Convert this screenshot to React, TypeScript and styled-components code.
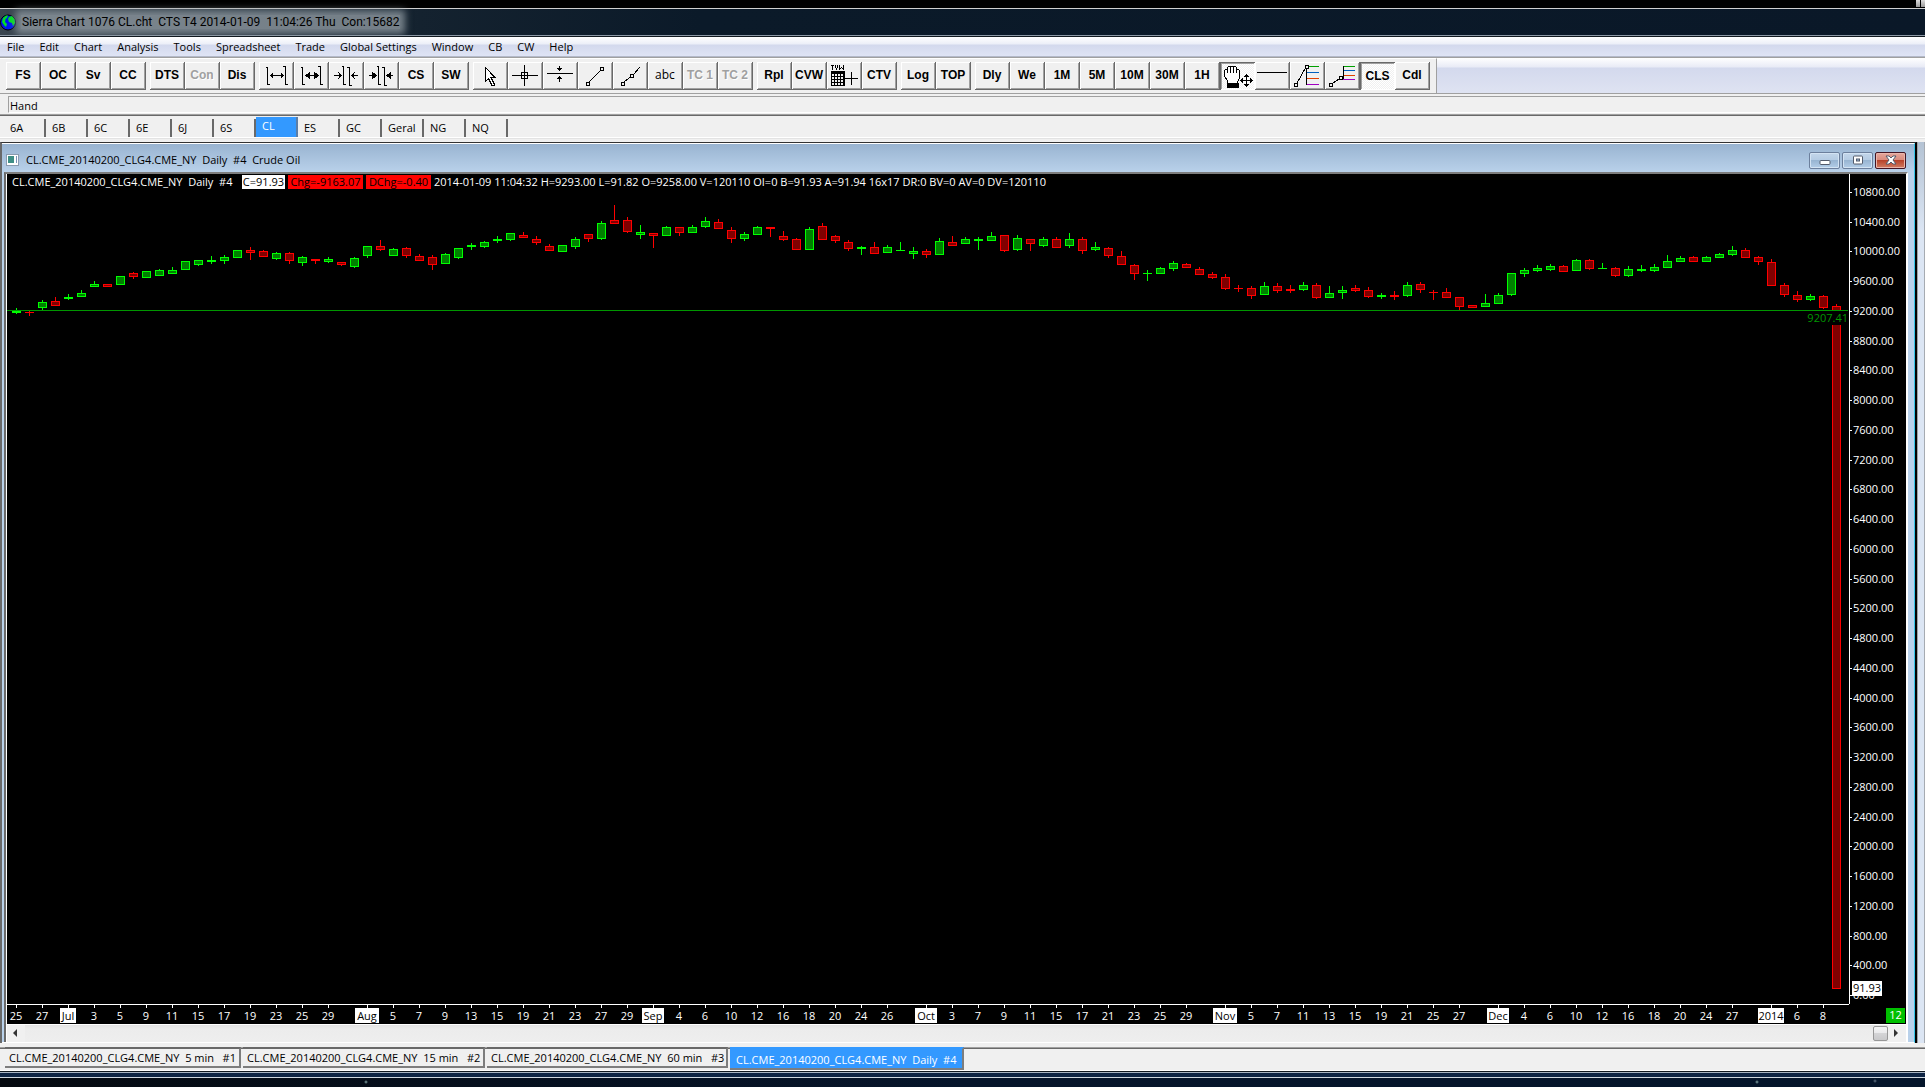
import React from "react";
import styled, { createGlobalStyle, css } from "styled-components";

const UI = '"Open Sans", "Noto Sans", sans-serif';

const GlobalStyle = createGlobalStyle`
  *, *::before, *::after { box-sizing: border-box; }
  body { margin: 0; background: #000; }
  button { font: inherit; color: inherit; border: 0; margin: 0; padding: 0; background: none; }
`;

const Desktop = styled.div`
  display: flex;
  flex-direction: column;
  min-height: 100vh;
  background: #000;
  color: #000;
  font: 11px/14px ${UI};
`;

const DesktopTop = styled.div`
  display: flex;
  justify-content: flex-end;
  gap: 1px;
  height: 8px;
  padding-bottom: 1px;
`;

const DesktopTile = styled.span`
  width: 4px;
  background: linear-gradient(#ddd, #999);
`;

const TitleBar = styled.header`
  display: flex;
  align-items: center;
  height: 28px;
  border-top: 1px solid #d0d0d0;
  border-bottom: 1px solid #8d99a6;
  background: linear-gradient(90deg, #3a4650 0, #14222f 420px, #0b1a29 700px, #0a1828 100%);
`;

const Title = styled.h1`
  margin: 0 0 0 4px;
  padding: 0 1px;
  font: 400 12px/14px Roboto, ${UI};
  white-space: pre;
  background: rgba(140, 150, 158, 0.8);
  box-shadow: 0 0 7px 5px rgba(140, 150, 158, 0.8);
`;

const MenuBar = styled.nav`
  display: flex;
  align-items: center;
  gap: 15px;
  height: 21px;
  padding: 0 7px;
  border-top: 1px solid #10181f;
  border-bottom: 1px solid #b3b9c9;
  background: linear-gradient(#fff 0, #eceff8 7px, #d3d9ed 8px, #dfe4f5 100%);
`;

const MenuItem = styled.button`
  white-space: nowrap;
`;

const ToolStrip = styled.div`
  display: flex;
  height: 37px;
  border-top: 1px solid #a0a0a0;
  border-bottom: 1px solid #a0a0a0;
  background: linear-gradient(#fff 0, #e8ebf6 9px, #d3d9ed 10px, #dfe3f2 100%);
`;

const Tools = styled.div`
  display: flex;
  gap: 4px;
  padding: 3px 6px 4px;
  border-top: 1px solid #fff;
  border-right: 1px solid #a0a0a0;
  background: #f0f0f0;
`;

const ToolGroup = styled.div`
  display: flex;
`;

const ToolButton = styled.button<{ $pressed?: boolean; $plain?: boolean }>`
  display: flex;
  align-items: center;
  justify-content: center;
  width: 35px;
  height: 28px;
  padding: 0 1px 2px 0;
  font: 700 12px/14px "Liberation Sans", Arial, sans-serif;
  background: #f0f0f0;
  box-shadow: inset -1px -1px #696969, inset 1px 1px #fff, inset -2px -2px #a0a0a0;
  &:disabled { color: #a0a0a0; text-shadow: 1px 1px #fff; }
  ${(p) => p.$plain && css`font: 400 12px/14px ${UI};`}
  ${(p) =>
    p.$pressed &&
    css`
      padding: 0;
      background: repeating-conic-gradient(#f0f0f0 0 25%, #fff 0 50%) 0 0 / 2px 2px;
      box-shadow: inset 1px 1px #696969, inset -1px -1px #fff, inset 2px 2px #a0a0a0;
    `}
  svg { flex: none; align-self: flex-start; }
`;

const StatusStrip = styled.div`
  height: 21px;
  padding: 2px 0 0 8px;
  background: #f0f0f0;
  border-bottom: 1px solid #a0a0a0;
`;

const StatusText = styled.div`
  height: 17px;
  padding: 1px;
  line-height: 15px;
  border-top: 1px solid #a0a0a0;
  border-left: 1px solid #a0a0a0;
  border-bottom: 1px solid #fff;
`;

const SymbolTabs = styled.div`
  display: flex;
  height: 27px;
  padding: 3px 4px 5px;
  border-top: 1px solid #696969;
  background: linear-gradient(#f0f0f0 21px, #fff 21px, #fff 22px, #e3e3e3 22px, #e3e3e3 23px, #f0f0f0 23px);
`;

const SymbolTab = styled.button<{ $active?: boolean }>`
  width: 42px;
  padding-left: 6px;
  text-align: left;
  height: 18px;
  border-right: 2px solid #696969;
  ${(p) =>
    p.$active &&
    css`
      height: 20px;
      margin-top: -2px;
      padding-bottom: 2px;
      color: #fff;
      background: #3399ff;
      border-right-color: #5c7ea6;
    `}
`;

const Workspace = styled.main`
  display: flex;
  flex: 1;
  min-height: 0;
  background: #f0f0f0;
`;

const ChartWindow = styled.section`
  display: flex;
  flex-direction: column;
  flex: 1;
  min-width: 0;
  border-left: 2px solid #696969;
  border-right: 2px solid #000;
  border-top: 1px solid #333;
  background: #b9d1ea;
`;

const WindowBody = styled.div`
  display: flex;
  flex-direction: column;
  flex: 1;
  padding: 0 6px 0 2px;
  border-top: 1px solid #fff;
  border-right: 1px solid #35c5e6;
  border-bottom: 1px solid #fff;
  background: linear-gradient(#99b4d1, #b9d1ea 28px);
`;

const WindowTitle = styled.div`
  display: flex;
  align-items: center;
  height: 28px;
  gap: 7px;
  padding: 4px 2px 0 2px;
`;

const WindowName = styled.h2`
  flex: 1;
  margin: 0;
  font-size: 11px;
  font-weight: 400;
  white-space: pre;
`;

const WindowButtons = styled.div`
  display: flex;
  gap: 2px;
`;

const WindowButton = styled.button<{ $close?: boolean }>`
  display: flex;
  align-items: center;
  justify-content: center;
  width: 31px;
  height: 17px;
  border: 1px solid ${(p) => (p.$close ? "#431422" : "#6c7f9c")};
  border-radius: 2px;
  background: ${(p) =>
    p.$close
      ? "linear-gradient(#e5a79c 0, #d98a7c 48%, #b8432b 50%, #d07c62 100%)"
      : "linear-gradient(#c3d6ea 0, #b4cbe3 48%, #98b5d2 50%, #b3cde8 100%)"};
  box-shadow: inset 0 0 0 1px ${(p) => (p.$close ? "#e9b5ab" : "#d3e3f3")};
`;

const Client = styled.div`
  display: flex;
  flex-direction: column;
  flex: 1;
  border-top: 2px solid #7d7d7d;
  border-left: 2px solid #696969;
  border-right: 2px solid #fff;
  background: #fff;
`;

const ChartGrid = styled.div`
  display: grid;
  flex: 1;
  grid-template-columns: 1fr 57px;
  grid-template-rows: 1fr 20px;
  margin-left: 1px;
  background: #000;
  color: #fff;
`;

const Plot = styled.div`
  display: flex;
  flex-direction: column;
  min-width: 0;
  svg { flex: 1; display: block; width: 100%; height: auto; min-height: 0; }
`;

const Quote = styled.div`
  display: flex;
  gap: 3px;
  height: 16px;
  padding: 1px 5px 0;
  white-space: pre;
`;

const QuoteName = styled.span`
  width: 227px;
`;

const QuoteBox = styled.span<{ $bg: string; $w: number }>`
  width: ${(p) => p.$w}px;
  height: 14px;
  text-align: center;
  color: #000;
  background: ${(p) => p.$bg};
`;

const PriceAxis = styled.div`
  border-left: 1px solid #fff;
  svg { display: block; width: 56px; height: 100%; }
`;

const DateAxis = styled.div`
  border-top: 1px solid #fff;
  svg { display: block; width: 100%; height: 19px; }
`;

const Corner = styled.div`
  display: flex;
  justify-content: flex-end;
  align-items: flex-end;
  padding: 0 1px 1px 0;
`;

const BarsBadge = styled.span`
  width: 19px;
  height: 15px;
  text-align: center;
  background: #00c000;
`;

const ScrollBar = styled.div`
  display: flex;
  align-items: center;
  height: 18px;
  margin-left: 1px;
  border-top: 1px solid #fff;
  background: linear-gradient(#e3e3e3, #ececec 4px, #eee);
`;

const ScrollArrow = styled.button`
  display: flex;
  align-items: center;
  justify-content: center;
  width: 18px;
  height: 17px;
  padding: 0 3px 2px 0;
  background: #f0f0f0;
`;

const ScrollTrack = styled.div`
  display: flex;
  flex: 1;
  justify-content: flex-end;
`;

const ScrollThumb = styled.button`
  width: 15px;
  height: 15px;
  border: 1px solid #979797;
  border-radius: 2px;
  background: linear-gradient(#f5f5f5 0, #e9e9eb 49%, #d4d4d6 50%, #c9c9cb 100%);
`;

const WindowBehind = styled.aside`
  width: 8px;
  background: linear-gradient(#b4c3d4, #dce6f4 90px);
  border-left: 1px solid #a0a0a0;
  border-right: 1px solid #a6abb2;
`;

const ChartTabs = styled.div`
  display: flex;
  gap: 2px;
  height: 28px;
  padding-left: 5px;
  border-top: 4px solid #f0f0f0;
  border-bottom: 1px solid #fff;
  background: linear-gradient(#a0a0a0 1px, #696969 1px, #696969 2px, #f0f0f0 2px);
`;

const ChartTab = styled.button<{ $w: number; $active?: boolean }>`
  width: ${(p) => p.$w}px;
  height: 21px;
  padding-left: 4px;
  text-align: left;
  white-space: pre;
  border-top: 2px solid #696969;
  border-right: 2px solid #7d7d7d;
  border-bottom: 2px solid #7d7d7d;
  ${(p) =>
    p.$active &&
    css`
      height: 23px;
      padding: 2px 0 0 6px;
      color: #fff;
      background: #3399ff;
      border-top-color: #3399ff;
    `}
`;

const WindowFoot = styled.footer`
  height: 7px;
  border-top: 1px solid #10181f;
  border-bottom: 1px solid #d0d8e0;
  background: linear-gradient(#a8b4c2 1px, #0d2444 1px);
`;

const DesktopBottom = styled.div`
  height: 9px;
  background:
    radial-gradient(circle at 366px 4px, #8aa 0, transparent 2px),
    radial-gradient(circle at 1757px 4px, #8aa 0, transparent 2px),
    radial-gradient(circle at 1875px 3px, #678 0, transparent 2px),
    linear-gradient(90deg, #04090f, #06152b 50%, #04152b);
`;

/* ---------- toolbar icons, drawn on the 35 x 28 face of a button ---------- */

const Icon = ({ children }: { children: React.ReactNode }) => (
  <svg width="35" height="28" viewBox="0 0 35 28" fill="none" stroke="#000" shapeRendering="crispEdges" aria-hidden="true">
    {children}
  </svg>
);

const icons: Record<string, React.ReactNode> = {
  widen: (
    <Icon>
      <path d="M8.5 5v18M7 5.5h2M8 22.5h3M26.5 4v19M24 4.5h3M26 22.5h3M11 13.5h14M13.5 11v5M12.5 12v3M22.5 11v5M23.5 12v3" />
    </Icon>
  ),
  widenMore: (
    <Icon>
      <path d="M8.5 5v18M7 5.5h2M8 22.5h3M26.5 4v19M24 4.5h3M26 22.5h3M11 13.5h14" />
      <path d="M11 13.5l5-4v8zM25 13.5l-5-4v8z" fill="#000" stroke="none" />
    </Icon>
  ),
  narrow: (
    <Icon>
      <path d="M14.5 4v19M13 4.5h2M14 22.5h3M20.5 5v19M18 5.5h3M20 23.5h3M5 13.5h8M11.5 12v3M10.5 11v5M9.5 10v1M9.5 16v1M22 13.5h7M23.5 12v3M24.5 11v5M25.5 10v1M25.5 16v1" />
    </Icon>
  ),
  narrowMore: (
    <Icon>
      <path d="M14.5 4v19M13 4.5h2M14 22.5h3M20.5 5v19M18 5.5h3M20 23.5h3M5 13.5h8M22 13.5h7" />
      <path d="M13 13.5l-5-4v8zM22 13.5l5-4v8z" fill="#000" stroke="none" />
    </Icon>
  ),
  pointer: (
    <Icon>
      <path d="M12.5 5.5v14l3-3 3.500 7h2v-2l-3-6h4z" fill="#fff" />
    </Icon>
  ),
  cross: (
    <Icon>
      <path d="M4 13.5h26M16.500 3v21M13.500 10.500h6v6h-6z" />
    </Icon>
  ),
  level: (
    <Icon>
      <path d="M4 11.500h26M16.500 4v5M14 6.500h5M15 7.500h3M16.500 14v6M15 15.500h3M14 16.500h5" />
    </Icon>
  ),
  line: (
    <Icon>
      <path d="M8.500 20.500h3v3h-3zM22.500 5.500h3v3h-3zM11 20L22.500 8.500" />
    </Icon>
  ),
  ray: (
    <Icon>
      <path d="M8.500 20.500h3v3h-3zM17.500 12.500h3v3h-3zM11 20l6.500-5M20.500 12.500L27 5" />
    </Icon>
  ),
  table: (
    <Icon>
      <path d="M4 3.500h3M5.500 3v5M8.500 3v3M9.500 6v2M10.500 3v3M12.500 3v5M13.500 6v1M14.500 5v1M15.500 6v1M16.500 3v5" />
      <path d="M4 9h14v15H4z" fill="#000" stroke="none" />
      <path d="M5 12.500h11M5 15.500h11M5 18.500h11M5 21.500h11" stroke="#f0f0f0" strokeWidth="2" strokeDasharray="2 1" />
      <path d="M18 16.500h13M24.500 10v13" />
    </Icon>
  ),
  hand: (
    <Icon>
      <path
        d="M7.500 21.500v-3l-3-4v-6l1-1h2v3V5.500l1-1h2v6V4.500h3v6V4.500h2l1 1v5V7.500h2l1 1v8l-2 3v2z"
        fill="#fff"
      />
      <path d="M7 21h12v5H7z" fill="#000" stroke="none" />
      <path d="M26.500 12v13M20 18.500h13" stroke="#fff" strokeWidth="3" />
      <path d="M26.500 12v13M20 18.500h13M24 14.500h5M25 13.500h3M24 22.500h5M25 23.500h3M22.500 16v5M21.500 17v3M30.500 16v5M31.500 17v3" />
    </Icon>
  ),
  horizontal: (
    <Icon>
      <path d="M2 10.500h30" />
    </Icon>
  ),
  retrace: (
    <Icon>
      <path d="M4.500 21.500h3v3h-3zM15.500 3.500h3v3h-3zM7 21L15.500 6M16.500 7v16" />
      <path d="M19 4.500h10" stroke="#00a000" />
      <path d="M17 10.500h12" stroke="#0060c0" />
      <path d="M17 16.500h12" stroke="#e04000" />
      <path d="M17 22.500h12" stroke="#a000c0" />
    </Icon>
  ),
  projection: (
    <Icon>
      <path d="M4.500 21.500h3v3h-3zM14.500 14.500h3v3h-3zM8 21l6-4M18.500 4v13" />
      <path d="M19 4.500h11" stroke="#00a000" />
      <path d="M19 8.500h11" stroke="#0060c0" />
      <path d="M19 13.500h11" stroke="#e04000" />
      <path d="M18 17.500h12" stroke="#a000c0" />
    </Icon>
  ),
};

type Tool = { text?: string; icon?: string; label?: string; off?: boolean; on?: boolean; plain?: boolean };

const t = (text: string): Tool => ({ text });
const toolGroups: Tool[][] = [
  ["FS", "OC", "Sv", "CC"].map(t),
  [t("DTS"), { text: "Con", off: true }, t("Dis")],
  [
    { icon: "widen", label: "Increase spacing" },
    { icon: "widenMore", label: "Increase spacing more" },
    { icon: "narrow", label: "Decrease spacing" },
    { icon: "narrowMore", label: "Decrease spacing more" },
    t("CS"),
    t("SW"),
  ],
  [
    { icon: "pointer", label: "Pointer" },
    { icon: "cross", label: "Chart values" },
    { icon: "level", label: "Price level" },
    { icon: "line", label: "Line" },
    { icon: "ray", label: "Ray" },
    { text: "abc", plain: true },
    { text: "TC 1", off: true },
    { text: "TC 2", off: true },
  ],
  [t("Rpl"), t("CVW"), { icon: "table", label: "Tool values window" }, t("CTV")],
  [t("Log"), t("TOP")],
  [
    ...["Dly", "We", "1M", "5M", "10M", "30M", "1H"].map(t),
    { icon: "hand", label: "Hand", on: true },
    { icon: "horizontal", label: "Horizontal line" },
    { icon: "retrace", label: "Retracement" },
    { icon: "projection", label: "Projection" },
    { text: "CLS", on: true },
    t("Cdl"),
  ],
];

const menus = ["File", "Edit", "Chart", "Analysis", "Tools", "Spreadsheet", "Trade", "Global Settings", "Window", "CB", "CW", "Help"];
const symbols = ["6A", "6B", "6C", "6E", "6J", "6S", "CL", "ES", "GC", "Geral", "NG", "NQ"];
const chartTabs = [
  { text: "CL.CME_20140200_CLG4.CME_NY  5 min   #1", w: 236 },
  { text: "CL.CME_20140200_CLG4.CME_NY  15 min   #2", w: 242 },
  { text: "CL.CME_20140200_CLG4.CME_NY  60 min   #3", w: 241 },
  { text: "CL.CME_20140200_CLG4.CME_NY  Daily  #4", w: 234, active: true },
];

/* ---------- chart ---------- */

const STEP = 13;
const FIRST = 9;

/* Each bar: direction, high, body top, body bottom, low (down the plot). */
const bars = `
G128,131,133,134 R131,132,133,136 G120,122,128,130 R117,121,126,126 G114,117,119,120 G110,113,117,117
G101,104,107,107 R104,104,107,107 G96,96,105,105 R92,93,97,99 G91,91,98,98 G89,90,96,96 G87,90,94,94
G81,81,90,90 G80,80,85,86 G76,80,82,84 G75,77,81,84 G70,70,78,78 R67,70,73,80 R70,71,77,77 G72,73,79,80
R72,73,81,84 G76,77,83,86 R79,79,81,84 G77,79,82,83 R82,82,85,86 G77,78,87,88 G66,66,76,78 R60,66,70,71
G68,69,76,76 R67,68,76,78 R74,76,81,81 R75,77,85,90 G73,74,84,84 G68,68,78,79 G63,65,67,70 G61,62,67,68
G56,59,61,63 G53,53,60,61 R52,55,58,58 R56,59,63,65 R64,66,71,71 G65,65,72,72 G57,59,67,69 R54,54,59,62
G41,43,59,60 R25,40,44,44 R37,40,52,53 G45,52,55,59 R53,53,56,68 G46,47,56,56 R47,47,53,56 G45,47,53,53
G37,41,47,48 R39,42,49,49 R47,50,59,63 G52,54,59,61 G46,47,55,55 R47,47,49,57 R51,56,60,61 R58,59,70,70
G47,49,70,70 R43,46,60,60 R55,56,61,63 R60,62,69,71 G66,67,69,75 R62,67,74,74 G65,67,73,73 G62,70,71,71
G67,71,74,79 R69,71,75,78 G58,61,75,75 R56,62,66,66 G57,59,64,64 G57,59,61,70 G52,56,61,61 R55,55,71,72
G55,58,70,71 R59,59,64,71 G57,59,66,67 R57,59,68,68 G53,59,66,68 R57,59,71,74 G62,67,70,71 R67,68,76,78
R71,76,85,85 R84,85,94,100 G90,93,94,101 G87,88,94,94 G81,83,89,91 R83,84,88,88 R87,89,95,95 R92,94,98,99
R94,97,109,110 R105,108,109,112 R106,108,116,119 G102,106,115,115 R103,106,111,113 R105,109,111,113
G102,105,110,111 R103,105,118,119 G106,113,118,118 G106,110,113,119 R105,108,111,112 R107,110,117,118
G113,115,117,119 R111,115,117,120 G102,105,116,117 R102,104,110,113 R110,112,113,120 R108,112,118,118
R117,117,127,130 R125,125,128,128 G114,123,127,127 G113,115,124,124 G93,93,115,116 G88,90,94,97 G85,88,91,92
G84,86,90,91 R85,86,92,92 G79,80,91,91 R79,80,89,90 G83,88,89,89 R87,88,96,97 G86,89,96,97 G85,89,91,92
G84,87,91,92 G75,81,88,88 G76,78,82,82 R76,77,82,82 G76,77,82,82 G73,74,78,78 G66,70,75,76 R68,70,78,78
R76,77,82,85 R79,82,106,106 R103,105,115,117 R111,115,120,122 G114,116,120,121 R115,116,128,129 R124,126,809,809
`
  .trim()
  .split(/\s+/)
  .map((s) => {
    const [high, top, bottom, low] = s.slice(1).split(",").map(Number);
    return { up: s[0] === "G", high, top, bottom, low };
  });

const Candles = () => (
  <svg shapeRendering="crispEdges" role="img" aria-label="Crude Oil daily candles">
    <g transform="translate(0 -10)">
      {bars.map((b, i) => {
        const x = FIRST + i * STEP;
        const color = b.up ? "#00ff00" : "#ff0000";
        return (
          <g key={i}>
            <rect x={x} y={b.high} width="1" height={b.low - b.high} fill={color} />
            <rect x={x - 4} y={b.top} width="9" height={b.bottom - b.top} fill={color} />
            {b.bottom - b.top > 2 && (
              <rect x={x - 3} y={b.top + 1} width="7" height={b.bottom - b.top - 2} fill={b.up ? "#008000" : "#800000"} />
            )}
          </g>
        );
      })}
      <rect x="0" y="130" width="1841" height="1" fill="#009600" />
      <rect x="1800" y="131" width="41" height="14" fill="#000" />
      <text x="1841" y="142" textAnchor="end" fill="#009600" fontSize="11">
        9207.41
      </text>
    </g>
  </svg>
);

const prices = Array.from({ length: 28 }, (_, i) => 10800 - i * 400);

const Prices = () => (
  <svg shapeRendering="crispEdges" fill="#fff" fontSize="11">
    {prices.map((p, i) => {
      const y = 18 + Math.round((i * 803) / 27);
      return (
        <g key={p}>
          <rect x="0" y={y} width="2" height="1" />
          <text x="3" y={y + 4}>{p.toFixed(2)}</text>
        </g>
      );
    })}
    <rect x="2" y="807" width="30" height="15" />
    <text x="3" y="818" fill="#000">91.93</text>
  </svg>
);

const months: [string, number, number, string[]][] = [
  ["", 0, 0, ["25", "27"]],
  ["Jul", 4, 16, ["3", "5", "9", "11", "15", "17", "19", "23", "25", "29"]],
  ["Aug", 27, 24, ["5", "7", "9", "13", "15", "19", "21", "23", "27", "29"]],
  ["Sep", 49, 22, ["4", "6", "10", "12", "16", "18", "20", "24", "26"]],
  ["Oct", 70, 22, ["3", "7", "9", "11", "15", "17", "21", "23", "25", "29"]],
  ["Nov", 93, 24, ["5", "7", "11", "13", "15", "19", "21", "25", "27"]],
  ["Dec", 114, 22, ["4", "6", "10", "12", "16", "18", "20", "24", "27"]],
  ["2014", 135, 26, ["6", "8"]],
];

const Dates = () => (
  <svg shapeRendering="crispEdges" fill="#fff" fontSize="11" textAnchor="middle">
    {months.map(([name, start, width, days]) => {
      const x = FIRST + start * STEP;
      const from = name ? 2 : 0;
      return (
        <g key={name}>
          {name && (
            <>
              <rect x={x} y="0" width="1" height="4" />
              <rect x={x - width / 2} y="3" width={width} height="15" />
              <text x={x} y="15" fill="#000">{name}</text>
            </>
          )}
          {days.map((d, i) => {
            const dx = x + (from + i * 2) * STEP;
            return (
              <g key={i}>
                <rect x={dx} y="0" width="1" height="3" />
                <text x={dx} y="15">{d}</text>
              </g>
            );
          })}
        </g>
      );
    })}
  </svg>
);

const Globe = () => (
  <svg width="17" height="17" viewBox="0 0 17 17" aria-hidden="true">
    <circle cx="8" cy="8.500" r="7.500" fill="#0018f0" stroke="#000" />
    <path d="M3 4l3-2.500h2L7 4 5.500 5 5 8l2 2-1 3-2-2-2-3z" fill="#00e020" />
    <path d="M9 3l3-1 2.500 3 .5 4-2 3-1-3-3-1-1-3z" fill="#00e020" />
  </svg>
);

export default function App() {
  return (
    <Desktop>
      <GlobalStyle />
      <DesktopTop>
        <DesktopTile />
        <DesktopTile />
      </DesktopTop>
      <TitleBar>
        <Globe />
        <Title>Sierra Chart 1076 CL.cht  CTS T4 2014-01-09  11:04:26 Thu  Con:15682</Title>
      </TitleBar>
      <MenuBar>
        {menus.map((m) => (
          <MenuItem key={m}>{m}</MenuItem>
        ))}
      </MenuBar>
      <ToolStrip>
        <Tools>
          {toolGroups.map((group, g) => (
            <ToolGroup key={g}>
              {group.map((b) => (
                <ToolButton key={b.text ?? b.icon} disabled={b.off} $pressed={b.on} $plain={b.plain} aria-label={b.label}>
                  {b.icon ? icons[b.icon] : b.text}
                </ToolButton>
              ))}
            </ToolGroup>
          ))}
        </Tools>
      </ToolStrip>
      <StatusStrip>
        <StatusText>Hand</StatusText>
      </StatusStrip>
      <SymbolTabs>
        {symbols.map((s) => (
          <SymbolTab key={s} $active={s === "CL"}>{s}</SymbolTab>
        ))}
      </SymbolTabs>
      <Workspace>
        <ChartWindow>
          <WindowBody>
            <WindowTitle>
              <svg width="13" height="12" viewBox="0 0 13 12" aria-hidden="true">
                <rect x=".5" y=".5" width="12" height="11" fill="#fff" stroke="#8a9bb0" />
                <rect x="2" y="2" width="6" height="7" fill="#3f8f86" />
                <rect x="10" y="2" width="1" height="7" fill="#7a93b8" />
              </svg>
              <WindowName>CL.CME_20140200_CLG4.CME_NY  Daily  #4  Crude Oil</WindowName>
              <WindowButtons>
                <WindowButton aria-label="Minimize">
                  <svg width="12" height="12" viewBox="0 0 12 12">
                    <rect x="1" y="6.500" width="10" height="4" rx="1" fill="#fff" stroke="#535b6b" />
                  </svg>
                </WindowButton>
                <WindowButton aria-label="Restore">
                  <svg width="12" height="10" viewBox="0 0 12 10">
                    <rect x="1.500" y="1" width="9" height="8" rx="1" fill="#fff" stroke="#535b6b" />
                    <rect x="4.500" y="4" width="3" height="2" fill="#9bb7d6" stroke="#535b6b" />
                  </svg>
                </WindowButton>
                <WindowButton $close aria-label="Close">
                  <svg width="12" height="10" viewBox="0 0 12 10">
                    <path d="M1 1h3l2 2 2-2h3L8 5l3 4H8L6 7 4 9H1l3-4z" fill="#fff" stroke="#535b6b" />
                  </svg>
                </WindowButton>
              </WindowButtons>
            </WindowTitle>
            <Client>
              <ChartGrid>
                <Plot>
                  <Quote>
                    <QuoteName>CL.CME_20140200_CLG4.CME_NY  Daily  #4</QuoteName>
                    <QuoteBox $bg="#fff" $w={43}>C=91.93</QuoteBox>
                    <QuoteBox $bg="#f00" $w={75}>Chg=-9163.07</QuoteBox>
                    <QuoteBox $bg="#f00" $w={65}>DChg=-0.40</QuoteBox>
                    <span>2014-01-09 11:04:32 H=9293.00 L=91.82 O=9258.00 V=120110 OI=0 B=91.93 A=91.94 16x17 DR:0 BV=0 AV=0 DV=120110</span>
                  </Quote>
                  <Candles />
                </Plot>
                <PriceAxis>
                  <Prices />
                </PriceAxis>
                <DateAxis>
                  <Dates />
                </DateAxis>
                <Corner>
                  <BarsBadge>12</BarsBadge>
                </Corner>
              </ChartGrid>
              <ScrollBar>
                <ScrollArrow aria-label="Scroll left">
                  <svg width="4" height="8" viewBox="0 0 4 8"><path d="M4 0v8L0 4z" fill="#333" /></svg>
                </ScrollArrow>
                <ScrollTrack>
                  <ScrollThumb aria-label="Scroll position" />
                </ScrollTrack>
                <ScrollArrow aria-label="Scroll right">
                  <svg width="4" height="8" viewBox="0 0 4 8"><path d="M0 0v8l4-4z" fill="#333" /></svg>
                </ScrollArrow>
              </ScrollBar>
            </Client>
          </WindowBody>
        </ChartWindow>
        <WindowBehind />
      </Workspace>
      <ChartTabs>
        {chartTabs.map((c) => (
          <ChartTab key={c.text} $w={c.w} $active={c.active}>{c.text}</ChartTab>
        ))}
      </ChartTabs>
      <WindowFoot />
      <DesktopBottom />
    </Desktop>
  );
}
